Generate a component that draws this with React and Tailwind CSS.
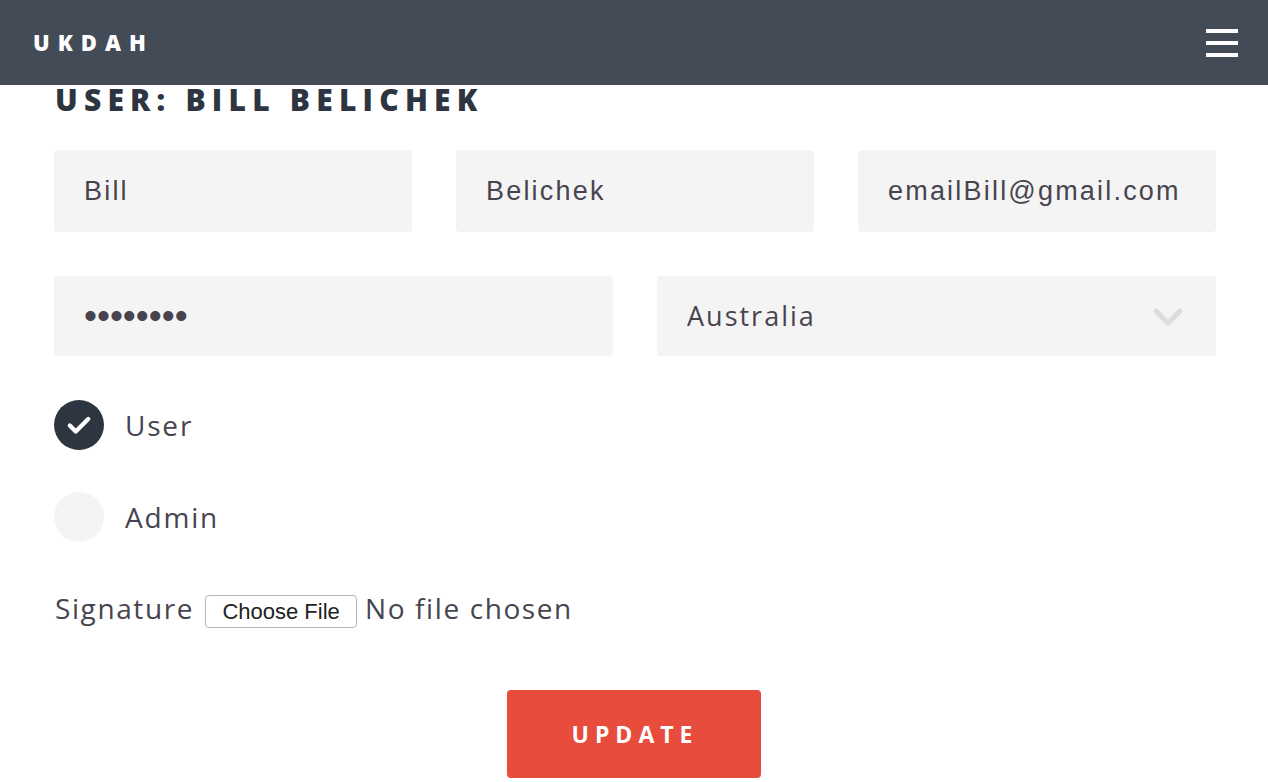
import { useState } from "react";

const inputCls =
  "w-full rounded-[4px] bg-[#f4f4f4] px-[30px] text-[27px] tracking-[2.2px] text-[#48444f] outline-none";

function Radio({ label, checked, onClick }) {
  return (
    <button type="button" onClick={onClick} className="flex items-center gap-[21px]">
      <span
        className={`flex h-[50px] w-[50px] items-center justify-center rounded-full ${
          checked ? "bg-[#2d3540]" : "bg-[#f4f4f4]"
        }`}
      >
        {checked && (
          <svg className="h-[26px] w-[26px]" viewBox="0 0 24 24" fill="none">
            <path d="M3.5 12.5l5.5 5.5L20.5 6.5" stroke="#fff" strokeWidth="4" strokeLinecap="round" strokeLinejoin="round" />
          </svg>
        )}
      </span>
      <span className="text-[28px] tracking-[1.8px] text-[#48444f]">{label}</span>
    </button>
  );
}

export default function App() {
  const [role, setRole] = useState("user");

  return (
    <div className="min-h-screen bg-white font-['Open_Sans',sans-serif]">
      {/* Header */}
      <header className="flex h-[85px] items-center justify-between bg-[#434c56] pl-[33px] pr-[30px]">
        <span className="text-[22px] font-extrabold tracking-[8px] text-white">UKDAH</span>
        <button type="button" className="flex flex-col gap-[8px]">
          <span className="block h-[4px] w-[32px] bg-white"></span>
          <span className="block h-[4px] w-[32px] bg-white"></span>
          <span className="block h-[4px] w-[32px] bg-white"></span>
        </button>
      </header>

      <main className="pl-[54px] pr-[52px]">
        <h1 className="pl-[1px] text-[30px] font-extrabold leading-none tracking-[6.2px] text-[#2d3540]">
          USER: BILL BELICHEK
        </h1>

        {/* Name / email */}
        <div className="mt-[35px] grid grid-cols-3 gap-[44px] font-['Liberation_Sans',sans-serif]">
          <input className={`${inputCls} h-[82px]`} defaultValue="Bill" />
          <input className={`${inputCls} h-[82px]`} defaultValue="Belichek" />
          <input className={`${inputCls} h-[82px]`} defaultValue="emailBill@gmail.com" />
        </div>

        {/* Password / country */}
        <div className="mt-[44px] grid grid-cols-2 gap-[44px] font-['Liberation_Sans',sans-serif]">
          <input
            type="password"
            className={`${inputCls} h-[80px] text-[37px] tracking-normal`}
            defaultValue="password"
          />
          <div className="relative">
            <select
              className={`${inputCls} h-[80px] appearance-none px-[27px] font-['Open_Sans',sans-serif] tracking-[2px]`}
              defaultValue="Australia"
            >
              <option>Australia</option>
              <option>New Zealand</option>
              <option>United Kingdom</option>
            </select>
            <svg
              className="pointer-events-none absolute right-[33px] top-[32px] h-[18px] w-[30px]"
              viewBox="0 0 30 18"
              fill="none"
            >
              <path d="M3 3l12 12L27 3" stroke="#dcdcdc" strokeWidth="5" strokeLinecap="round" strokeLinejoin="round" />
            </svg>
          </div>
        </div>

        {/* Role */}
        <div className="mt-[44px] flex flex-col items-start gap-[42px]">
          <Radio label="User" checked={role === "user"} onClick={() => setRole("user")} />
          <Radio label="Admin" checked={role === "admin"} onClick={() => setRole("admin")} />
        </div>

        {/* Signature */}
        <div className="mt-[53px] flex h-[33px] items-center text-[28px] leading-[33px] tracking-[1.6px] text-[#48444f]">
          <span className="-mt-[6px] pl-[1px]">Signature</span>
          <button
            type="button"
            className="ml-[11px] h-[33px] w-[152px] rounded-[4px] border border-[#b5b5b5] bg-white font-['Liberation_Sans',sans-serif] text-[22px] leading-none tracking-normal text-[#222]"
          >
            Choose File
          </button>
          <span className="-mt-[6px] ml-[8px]">No file chosen</span>
        </div>

        {/* Submit */}
        <div className="mt-[62px] flex justify-center pr-[2px]">
          <button
            type="button"
            className="h-[88px] w-[254px] rounded-[4px] bg-[#e84c3d] pl-[2px] text-[23px] font-bold tracking-[6px] text-white"
          >
            UPDATE
          </button>
        </div>
      </main>
    </div>
  );
}
